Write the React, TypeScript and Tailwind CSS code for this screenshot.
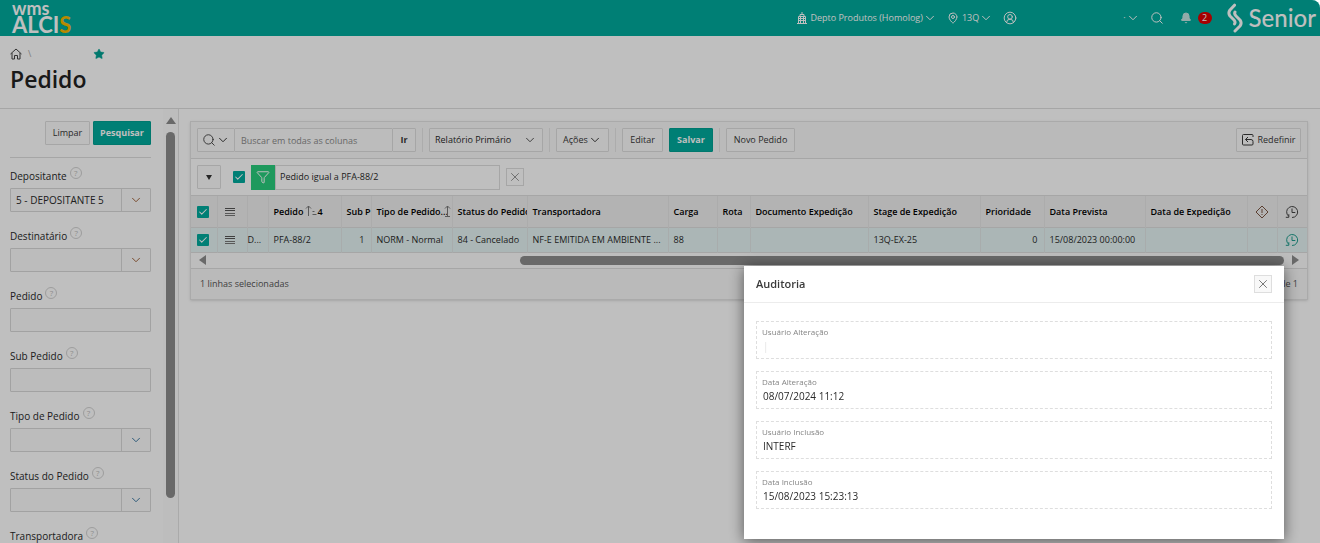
import type { ReactNode } from "react"
import { Bell, Check, ChevronDown, CircleUserRound, Filter, MapPin, Search, Star, X } from "lucide-react"

const filters = [
  { id: "depositante", label: "Depositante", value: "5 - DEPOSITANTE 5", list: true, tint: "text-[#a0643c]" },
  { id: "destinatario", label: "Destinatário", value: "", list: true, tint: "text-[#a0643c]" },
  { id: "pedido", label: "Pedido", value: "", list: false, tint: "" },
  { id: "sub-pedido", label: "Sub Pedido", value: "", list: false, tint: "" },
  { id: "tipo-pedido", label: "Tipo de Pedido", value: "", list: true, tint: "text-[#3c78a0]" },
  { id: "status-pedido", label: "Status do Pedido", value: "", list: true, tint: "text-[#3c78a0]" },
  { id: "transportadora", label: "Transportadora", value: "", list: true, tint: "text-[#3c78a0]" },
]

const columns = [
  { name: "Pedido", value: "PFA-88/2", width: "w-[73px]", order: "4" },
  { name: "Sub P", value: "1", width: "w-[30px]", right: true },
  { name: "Tipo de Pedido...", value: "NORM - Normal", width: "w-[81px]", both: true },
  { name: "Status do Pedido", value: "84 - Cancelado", width: "w-[75px]" },
  { name: "Transportadora", value: "NF-E EMITIDA EM AMBIENTE ...", width: "w-[141px]" },
  { name: "Carga", value: "88", width: "w-[49px]" },
  { name: "Rota", value: "", width: "w-[33px]" },
  { name: "Documento Expedição", value: "", width: "" },
  { name: "Stage de Expedição", value: "13Q-EX-25", width: "w-[112px]" },
  { name: "Prioridade", value: "0", width: "w-[64px]", right: true },
  { name: "Data Prevista", value: "15/08/2023 00:00:00", width: "w-[101px]" },
  { name: "Data de Expedição", value: "", width: "w-[102px]" },
]

const audit = [
  { id: "usuario-alteracao", label: "Usuário Alteração", value: "|", tone: "text-[#e4e4e4]" },
  { id: "data-alteracao", label: "Data Alteração", value: "08/07/2024 11:12", tone: "text-[#2a2a2a]" },
  { id: "usuario-inclusao", label: "Usuário Inclusão", value: "INTERF", tone: "text-[#2a2a2a]" },
  { id: "data-inclusao", label: "Data Inclusão", value: "15/08/2023 15:23:13", tone: "text-[#2a2a2a]" },
]

function Button({ children, hot = false, className = "" }: { children: ReactNode; hot?: boolean; className?: string }) {
  const tone = hot ? "border-[#00a092] bg-[#00aa9c] font-bold text-white" : "border-[#dedede] bg-[#fbfbfb] text-[#383838]"
  return (
    <button
      type="button"
      className={`flex h-6 shrink-0 items-center justify-center whitespace-nowrap rounded-[1px] border ${tone} ${className}`}
    >
      {children}
    </button>
  )
}

function Chevron() {
  return <ChevronDown className="h-3.5 w-3.5 shrink-0" strokeWidth={1.7} />
}

function Divider() {
  return <span className="mx-1.5 h-6 w-px shrink-0 bg-[#e6e6e6]" />
}

function Tick({ label }: { label: string }) {
  return (
    <span className="inline-grid h-3 w-3 shrink-0 place-items-center align-middle">
      <input
        type="checkbox"
        defaultChecked
        aria-label={label}
        className="col-start-1 row-start-1 h-3 w-3 appearance-none rounded-[1px] bg-[#00aa9c]"
      />
      <Check className="pointer-events-none col-start-1 row-start-1 h-2.5 w-2.5 text-white" strokeWidth={2.5} />
    </span>
  )
}

function MenuLines() {
  return (
    <svg viewBox="0 0 10 8" className="inline-block h-2 w-2.5 align-middle" fill="none">
      <path d="M0 .5h10M0 2.500h10" stroke="#555" />
      <path d="M0 5.500h10M0 7.500h10" stroke="#777" />
    </svg>
  )
}

function History({ color }: { color: string }) {
  return (
    <svg viewBox="0 0 14 14" className={`inline-block h-3.5 w-3.5 align-middle ${color}`} fill="none" stroke="currentColor">
      <path d="M3.600 11.200A5.500 5.500 0 1 1 7 12.500M.8 12.300h3V9.200M7 3.500V7.500h3.300" />
    </svg>
  )
}

function TopBar() {
  return (
    <header className="flex h-9 shrink-0 items-center rounded-tr-lg bg-[#00aa9c] text-[9px] text-white">
      <a href="#" className="ml-3 flex flex-col font-[Lato,sans-serif] font-bold">
        <span className="text-[18px] leading-[12px]">wms</span>
        <span className="text-[22px] leading-[21px]">
          ALCI<span className="text-[#f5b800]">S</span>
        </span>
      </a>
      <nav className="ml-auto flex items-center">
        <button className="flex items-center">
          <svg viewBox="0 0 10 12" className="mr-[3px] h-3 w-2.5" fill="none" stroke="currentColor">
            <path d="M0 11.500h10M1.500 11V4.500h7V11M3 4V2.500h4V4M5 2V0M3.500 4.500V11M6.500 4.500V11M1.500 6.500h7M1.500 8.500h7" />
          </svg>
          Depto Produtos (Homolog)
          <Chevron />
        </button>
        <button className="ml-2.5 flex items-center">
          <MapPin className="mr-[3px] h-3 w-3" />
          13Q
          <Chevron />
        </button>
        <button className="ml-2.5" aria-label="Usuário">
          <CircleUserRound className="h-3.5 w-3.5" strokeWidth={1.7} />
        </button>
        <button className="ml-[106px] flex items-center" aria-label="Conta">
          ·
          <Chevron />
        </button>
        <button className="ml-2.5" aria-label="Buscar">
          <Search className="h-3.5 w-3.5" strokeWidth={1.7} />
        </button>
        <button className="ml-4 flex items-center gap-1.5" aria-label="Notificações">
          <Bell className="h-3 w-3 text-[#c3e5e2]" fill="currentColor" />
          <span className="flex h-3 w-3.5 items-center justify-center rounded-full bg-[#e00000] text-[9px]">2</span>
        </button>
      </nav>
      <a href="#" className="mr-1 ml-[15px] flex items-center gap-1.5">
        <svg viewBox="0 0 16 30" className="h-[30px] w-4" fill="none" stroke="currentColor" strokeWidth="3" strokeLinecap="round" strokeLinejoin="round">
          <path d="M7.500 2.200 3 7Q.8 10 3 13L7 17Q8.800 19 7.500 21" />
          <path d="M8 9Q7 11 9 13L13 17Q15.200 20 13 23L8 28" />
        </svg>
        <span className="font-[Lato,sans-serif] text-[24px] leading-[28px] font-medium">Senior</span>
      </a>
    </header>
  )
}

function Sidebar() {
  return (
    <aside className="flex w-[179px] shrink-0 border-r border-[#e3e3e3]">
      <form className="min-w-0 flex-1 pt-3 pr-3 pl-2.5">
        <div className="mb-1 flex justify-end gap-[3px] border-b border-[#dedede] pb-3">
          <Button className="w-[45px]">Limpar</Button>
          <Button hot className="w-[58px]">
            Pesquisar
          </Button>
        </div>
        {filters.map((f) => (
          <div key={f.id} className="pb-2.5">
            <div className="flex h-[26px] gap-[3px] pt-1.5 pb-1">
              <label htmlFor={f.id} className="text-[10px] leading-[16px] text-[#2a2a2a]">
                {f.label}
              </label>
              <button
                type="button"
                aria-label={`Ajuda ${f.label}`}
                className="-mt-px flex h-3 w-3 items-center justify-center rounded-full border border-[#d2d2d2] text-[8px] text-[#bdbdbd]"
              >
                ?
              </button>
            </div>
            <div className="flex h-6 rounded-[1px] border border-[#d8d8d8] bg-[#fbfbfb]">
              <input
                id={f.id}
                defaultValue={f.value}
                className="w-full min-w-0 flex-1 px-[5px] text-[10px] text-[#2a2a2a] outline-none"
              />
              {f.list && (
                <button
                  type="button"
                  aria-label={`Abrir ${f.label}`}
                  className={`flex w-[29px] items-center justify-center border-l border-[#d8d8d8] ${f.tint}`}
                >
                  <Chevron />
                </button>
              )}
            </div>
          </div>
        ))}
      </form>
      <div className="flex w-[15px] flex-col items-center bg-[#fcfcfc] pt-2">
        <span className="border-x-[5px] border-b-[7px] border-x-transparent border-b-[#8c8c8c]" />
        <span className="mt-2 h-[86%] w-[9px] rounded-full bg-[#8c8c8c]" />
      </div>
    </aside>
  )
}

function Toolbar() {
  return (
    <div className="flex items-center border-b border-[#dedede] bg-[#f9f9f9] p-1.5">
      <Button className="w-[38px]">
        <Search className="h-3.5 w-3.5" strokeWidth={1.5} />
        <Chevron />
      </Button>
      <input
        aria-label="Buscar em todas as colunas"
        placeholder="Buscar em todas as colunas"
        className="h-6 w-[157px] min-w-0 border-y border-[#dedede] bg-[#fbfbfb] px-1.5 outline-none placeholder:text-[#8b8b8b]"
      />
      <Button className="w-6 font-bold">Ir</Button>
      <Divider />
      <span className="grid w-[114px] shrink-0 items-center">
        <select
          aria-label="Relatório"
          className="col-start-1 row-start-1 h-6 appearance-none rounded-[1px] border border-[#dedede] bg-[#fbfbfb] px-[5px] text-[#2a2a2a]"
        >
          <option>Relatório Primário</option>
        </select>
        <span className="pointer-events-none col-start-1 row-start-1 mr-1.5 justify-self-end text-[#555]">
          <Chevron />
        </span>
      </span>
      <Divider />
      <Button className="w-[53px]">
        Ações
        <Chevron />
      </Button>
      <Divider />
      <Button className="mr-1.5 w-[41px]">Editar</Button>
      <Button hot className="w-11">
        Salvar
      </Button>
      <Divider />
      <Button className="w-[69px]">Novo Pedido</Button>
      <Button className="ml-auto w-[65px] gap-1">
        <svg viewBox="0 0 12 12" className="h-3 w-3" fill="none" stroke="currentColor">
          <path d="M11 3V1.500Q11 .5 10 .5H1.500Q.5 .5 .5 1.500V10Q.5 11 1.500 11H10Q11 11 11 10V7.500Q11 5.500 9 5.500H3.500M6 3 3.500 5.500 6 8" />
        </svg>
        Redefinir
      </Button>
    </div>
  )
}

function Grid() {
  return (
    <table className="w-full table-fixed border-collapse text-[#2a2a2a]">
      <colgroup>
        <col className="w-[26px]" />
        <col className="w-[30px]" />
        <col className="w-[21px]" />
        {columns.map((c) => (
          <col key={c.name} className={c.width} />
        ))}
        <col className="w-[30px]" />
        <col className="w-[30px]" />
      </colgroup>
      <thead>
        <tr className="h-[31px] border-b border-[#dedede] bg-[#efefef] text-left">
          <th className="pr-0.5 text-center">
            <Tick label="Selecionar todas" />
          </th>
          <th className="border-x border-[#e6e6e6] pr-1 text-center">
            <MenuLines />
          </th>
          <th className="border-x border-[#e6e6e6]" />
          {columns.map((c) => (
            <th key={c.name} className="overflow-hidden border-r border-[#e6e6e6] pl-[5px] font-semibold whitespace-nowrap text-black">
              <span className="flex items-center">
                {c.name}
                {c.order && (
                  <svg viewBox="0 0 12 12" className="ml-0.5 h-3 w-3" fill="none" stroke="#777">
                    <path d="M3.500 11V1M1 3.500 3.500 1 6 3.500M7.500 6.500h2M7.500 9.500h4" />
                  </svg>
                )}
                {c.order}
                {c.both && (
                  <svg viewBox="0 0 8 12" className="-ml-1 h-3 w-2 shrink-0" fill="none" stroke="#777">
                    <path d="M3.500 11V1M1 3.500 3.500 1 6 3.500M1 11.500h5" />
                  </svg>
                )}
              </span>
            </th>
          ))}
          <th className="border-r border-[#e6e6e6] text-center">
            <svg viewBox="0 0 14 14" className="inline-block h-3.5 w-3.5 align-middle" fill="none" stroke="#7a5540">
              <path d="M7 1 13 7 7 13 1 7ZM7 4v4M7 9v1" />
            </svg>
          </th>
          <th className="text-center">
            <History color="text-[#444]" />
          </th>
        </tr>
      </thead>
      <tbody>
        <tr className="h-[25px] border-b border-[#dedede] bg-[#e4f3f3]">
          <td className="pr-0.5 text-center">
            <Tick label="Selecionar linha" />
          </td>
          <td className="border-x border-[#e0e6e6] pr-1 text-center">
            <MenuLines />
          </td>
          <td className="border-x border-[#e0e6e6] whitespace-nowrap">D...</td>
          {columns.map((c) => (
            <td
              key={c.name}
              className={`border-r border-[#e0e6e6] pl-[5px] whitespace-nowrap ${c.right ? "pr-1.5 text-right" : ""}`}
            >
              {c.value}
            </td>
          ))}
          <td className="border-r border-[#e0e6e6]" />
          <td className="text-center">
            <History color="text-[#1d9c8c]" />
          </td>
        </tr>
      </tbody>
    </table>
  )
}

function Report() {
  return (
    <section className="border border-[#e3e3e3] text-[9px] shadow-sm">
      <Toolbar />
      <div className="flex h-[37px] items-center border-b border-[#dedede] px-1.5">
        <Button className="mr-3 w-6">
          <span className="border-x-[3px] border-t-[5px] border-x-transparent border-t-[#333]" />
        </Button>
        <Tick label="Ativar filtro" />
        <span className="ml-1.5 flex h-[25px] w-6 items-center justify-center bg-[#29cd7d] text-white">
          <Filter className="h-3.5 w-3.5" strokeWidth={1.7} />
        </span>
        <button className="h-[25px] w-[225px] border border-[#dedede] px-1 text-left text-[#2a2a2a]">
          Pedido igual a PFA-88/2
        </button>
        <button
          aria-label="Remover filtro"
          className="ml-1.5 flex h-[18px] w-[18px] items-center justify-center border border-[#dedede] text-[#888]"
        >
          <X className="h-3.5 w-3.5" strokeWidth={1.5} />
        </button>
      </div>
      <Grid />
      <div className="flex h-4 items-center border-b border-[#dedede] bg-[#fcfcfc] px-2">
        <span className="border-y-[5px] border-r-[7px] border-y-transparent border-r-[#8c8c8c]" />
        <span className="ml-auto h-[9px] w-[69.5%] rounded-full bg-[#8c8c8c]" />
        <span className="ml-2 border-y-[5px] border-l-[7px] border-y-transparent border-l-[#8c8c8c]" />
      </div>
      <footer className="flex h-[30px] items-center justify-between bg-[#f9f9f9] px-[9px] text-[#555]">
        <span>1 linhas selecionadas</span>
        <span>1 de 1</span>
      </footer>
    </section>
  )
}

function AuditDialog() {
  return (
    <div className="fixed inset-0 flex items-start justify-end rounded-tr-lg bg-black/25 pt-[266px] pr-9">
      <div role="dialog" aria-labelledby="audit-title" className="w-[540px] bg-white shadow-[0_2px_14px_rgba(0,0,0,0.55)]">
        <div className="flex h-[37px] items-center justify-between border-b border-[#ececec] px-3">
          <h2 id="audit-title" className="text-[11px] font-semibold text-[#3a3a3a]">
            Auditoria
          </h2>
          <button
            aria-label="Fechar"
            className="flex h-[18px] w-[18px] items-center justify-center border border-[#dedede] bg-[#f8f8f8] text-[#666]"
          >
            <X className="h-3.5 w-3.5" strokeWidth={1.5} />
          </button>
        </div>
        <div className="flex flex-col gap-3 px-3 pt-[18px] pb-[30px]">
          {audit.map((a) => (
            <div key={a.id} className="flex h-[38px] flex-col border border-dashed border-[#dedede] px-[5px] pt-1">
              <label htmlFor={a.id} className="text-[8px] leading-[12px] text-[#858585]">
                {a.label}
              </label>
              <input
                id={a.id}
                readOnly
                defaultValue={a.value}
                className={`h-4 px-px text-[10px] outline-none ${a.tone}`}
              />
            </div>
          ))}
        </div>
      </div>
    </div>
  )
}

export default function App() {
  return (
    <div className="flex h-screen flex-col overflow-hidden bg-white font-['Open_Sans','Noto_Sans',sans-serif] text-[9px]">
      <TopBar />
      <div className="h-[73px] shrink-0 border-b border-[#dedede] px-2.5 pt-3">
        <nav className="flex h-3 items-center text-[#aaa]">
          <a href="#" aria-label="Início">
            <svg viewBox="0 0 12 12" className="h-3 w-3" fill="none" stroke="#444">
              <path d="M.5 6 6 1l5.500 5M2 5v6h2.500V7.500h3V11H10V5" />
            </svg>
          </a>
          <span className="ml-1.5">\</span>
          <button aria-label="Favorito" className="ml-[62px] text-[#00a092]">
            <Star className="h-3 w-3" fill="currentColor" strokeWidth={1} strokeLinejoin="miter" />
          </button>
        </nav>
        <h1 className="mt-1 text-[23px] leading-[30px] font-semibold text-[#222]">Pedido</h1>
      </div>
      <div className="flex min-h-0 flex-1">
        <Sidebar />
        <main className="min-w-0 flex-1 pt-3 pr-3 pl-[11px]">
          <Report />
        </main>
      </div>
      <AuditDialog />
    </div>
  )
}
